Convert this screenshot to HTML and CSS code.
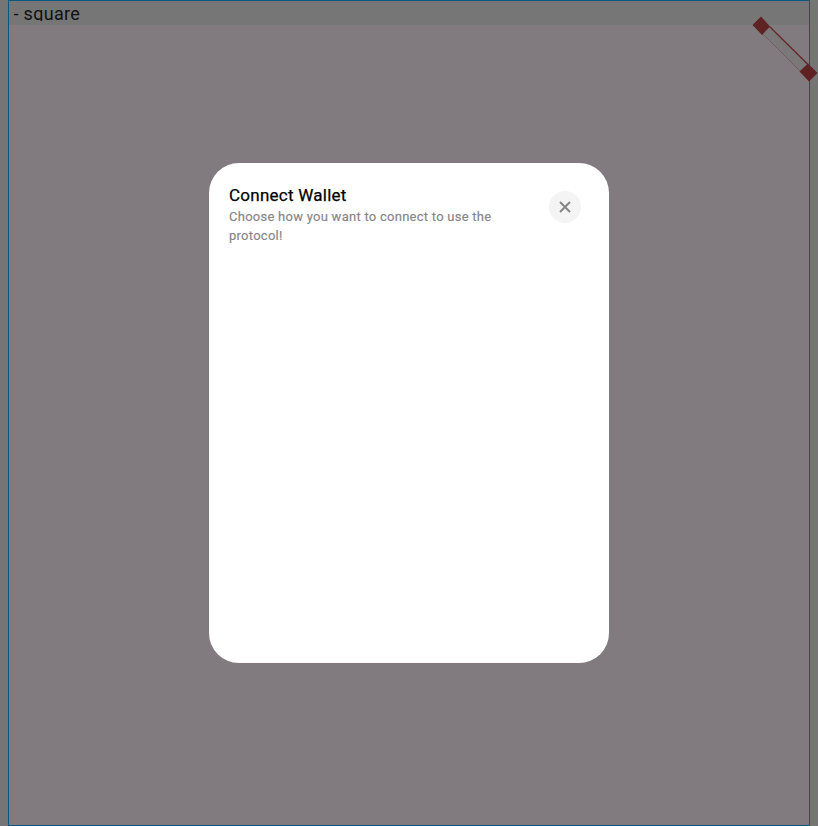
FILE: index.html
```
<!DOCTYPE html>
<html lang="en">
<head>
<meta charset="utf-8">
<title>Connect Wallet</title>
<link rel="stylesheet" href="styles.css">
</head>
<body>
<div class="device">
  <header class="label"><span class="label-text">- square</span></header>
  <svg class="banner" viewBox="0 0 70 70" aria-hidden="true">
    <path d="M17.5 11L55 48.5 48.5 55.5 11 18z" fill="#7a7878"/>
    <path d="M23 29.5L29.5 23M30.5 37L37 30.5M38 44.5L44.5 38" stroke="#6e6c6c" stroke-width=".4"/>
    <path d="M11 18L48.5 55.5" stroke="#6d5759" stroke-width=".8"/>
    <path d="M17.5 10.5L56 48.5" stroke="#642527" stroke-width="1.3"/>
    <path d="M9 .5L18 10.5 10 19 .5 9z M56 47.5L65.5 57 57 65.5 47.5 55.5z" fill="#5e2223"/>
  </svg>
</div>
<main class="dialog" role="dialog">
  <div class="copy">
    <h1>Connect Wallet</h1>
    <p>Choose how you want to connect to use the protocol!</p>
  </div>
  <button class="close" aria-label="Close">
    <svg viewBox="0 0 12 12"><path d="M1 1L11 11M11 1L1 11" stroke="#85858a" stroke-width="2" fill="none"/></svg>
  </button>
</main>
</body>
</html>
```
FILE: styles.css
```
* { box-sizing: border-box; }
html, body { height: 100%; }
body {
  margin: 0;
  overflow: hidden;
  display: grid;
  place-items: center;
  background: #757575;
  font-family: Roboto, sans-serif;
}
.device, .dialog { grid-area: 1 / 1; }
.device {
  position: relative;
  width: 802px;
  height: 826px;
  border: 1px solid #065a80;
  background: #817b7f;
}
.label {
  height: 24px;
  padding: 0 4.5px;
  background: #767676;
}
.label-text {
  display: block;
  height: 20px;
  overflow: hidden;
  font-size: 18px;
  line-height: 26px;
  letter-spacing: .3px;
  color: #111;
}
.banner {
  position: absolute;
  left: 743px;
  top: 15px;
  width: 70px;
  height: 70px;
}
.dialog {
  position: relative;
  width: 400px;
  height: 500px;
  padding: 21px 28px 20px 20px;
  border-radius: 30px;
  background: #fff;
  display: flex;
  justify-content: space-between;
  align-items: flex-start;
}
.copy { width: 280px; }
h1 {
  margin: 0;
  font-size: 17px;
  line-height: 23px;
  font-weight: 400;
  letter-spacing: .25px;
  -webkit-text-stroke: .25px #000;
  color: #000;
}
p {
  margin: 0;
  font-size: 13px;
  line-height: 19px;
  letter-spacing: .26px;
  -webkit-text-stroke: .15px #858588;
  color: #858588;
}
.close {
  display: grid;
  place-items: center;
  width: 32px;
  height: 32px;
  margin-top: 7px;
  padding: 0;
  border: 0;
  border-radius: 50%;
  background: #f4f4f4;
}
.close svg { width: 12px; height: 12px; }
```
